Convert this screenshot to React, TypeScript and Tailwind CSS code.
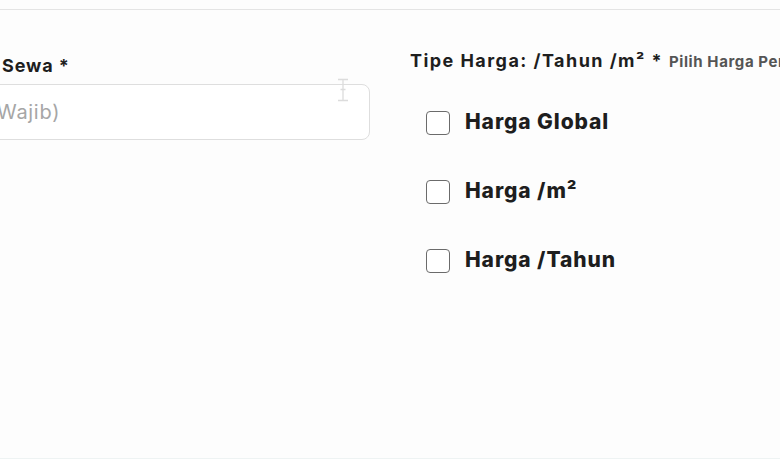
const options = ["Harga Global", "Harga /m²", "Harga /Tahun"];

function Checkbox({ label }: { label: string }) {
  return (
    <label className="flex items-center gap-[15px] h-[24px]">
      <span className="w-[24px] h-[24px] rounded-[4px] border-[1.5px] border-[#6b6b6b] bg-white shrink-0" />
      <span className="-mt-[2px] text-[21px] font-extrabold text-[#1e1e1e] tracking-[0.9px]">{label}</span>
    </label>
  );
}

export default function App() {
  return (
    <div
      className="w-[780px] h-[459px] bg-[#fdfdfd] overflow-hidden flex flex-col"
      style={{ fontFamily: "Inter, 'Noto Sans', sans-serif" }}
    >
      <div className="h-[10px] border-b border-[#e4e4e4] shrink-0" />
      <div className="flex flex-1 border-b border-[#eef3f3]">
        {/* left column */}
        <div className="relative w-[370px] shrink-0 pt-[46px]">
          <div className="pl-[2px] text-[18px] font-bold text-[#1e1e1e] leading-[20px] tracking-[0.9px]">Sewa *</div>
          <div className="mt-[8px] -ml-[33px] h-[56px] rounded-[8px] border border-[#dedede] bg-white flex items-center pl-[21px]">
            <span className="text-[20px] text-[#a6a6a6] tracking-[0.7px]">(Wajib)</span>
          </div>
          <svg
            className="absolute left-[336px] top-[68px]"
            width="14"
            height="24"
            viewBox="0 0 14 24"
            fill="none"
            stroke="#dcdcdc"
            strokeWidth="1.3"
          >
            <path d="M2 1.5h10M2 22.5h10M7 1.5v21M4.5 11.5h5" />
          </svg>
        </div>
        {/* right column */}
        <div className="ml-[40px] flex-1 pt-[41px] whitespace-nowrap">
          <div className="flex items-baseline gap-[6px] leading-[20px]">
            <span className="text-[18px] font-bold text-[#1e1e1e] tracking-[1.45px]">Tipe Harga: /Tahun /m² *</span>
            <span className="text-[15px] font-bold text-[#555555] tracking-[0.6px]">Pilih Harga Per Satuan</span>
          </div>
          <div className="pl-[16px] pt-[39px] flex flex-col gap-[45px]">
            {options.map((o) => (
              <Checkbox key={o} label={o} />
            ))}
          </div>
        </div>
      </div>
    </div>
  );
}
